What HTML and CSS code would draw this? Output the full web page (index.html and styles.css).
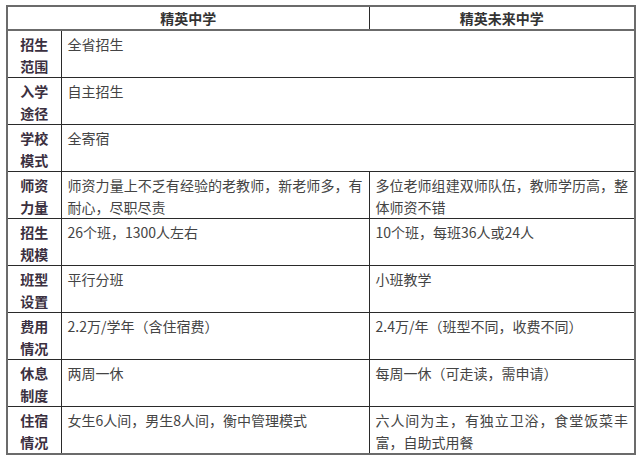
FILE: index.html
```html
<!DOCTYPE html>
<html lang="zh-CN">
<head>
<meta charset="utf-8">
<title>精英中学 vs 精英未来中学</title>
<link rel="stylesheet" href="styles.css">
</head>
<body>
<table class="cmp">
  <colgroup>
    <col class="c-label">
    <col class="c-a">
    <col class="c-b">
  </colgroup>
  <thead>
    <tr class="head">
      <th colspan="2">精英中学</th>
      <th>精英未来中学</th>
    </tr>
  </thead>
  <tbody>
    <tr><th class="lbl">招生<br>范围</th><td colspan="2">全省招生</td></tr>
    <tr><th class="lbl">入学<br>途径</th><td colspan="2">自主招生</td></tr>
    <tr><th class="lbl">学校<br>模式</th><td colspan="2">全寄宿</td></tr>
    <tr><th class="lbl">师资<br>力量</th><td>师资力量上不乏有经验的老教师，新老师多，有耐心，尽职尽责</td><td>多位老师组建双师队伍，教师学历高，整体师资不错</td></tr>
    <tr><th class="lbl">招生<br>规模</th><td>26个班，1300人左右</td><td>10个班，每班36人或24人</td></tr>
    <tr><th class="lbl">班型<br>设置</th><td>平行分班</td><td>小班教学</td></tr>
    <tr><th class="lbl">费用<br>情况</th><td>2.2万/学年（含住宿费）</td><td>2.4万/年（班型不同，收费不同）</td></tr>
    <tr><th class="lbl">休息<br>制度</th><td>两周一休</td><td>每周一休（可走读，需申请）</td></tr>
    <tr><th class="lbl">住宿<br>情况</th><td>女生6人间，男生8人间，衡中管理模式</td><td>六人间为主，有独立卫浴，食堂饭菜丰富，自助式用餐</td></tr>
  </tbody>
</table>
</body>
</html>
```

FILE: styles.css
```css
html, body {
  margin: 0;
  padding: 0;
  background: #ffffff;
}

body {
  font-family: "Noto Sans CJK SC", "Liberation Sans", sans-serif;
  font-size: 14px;
  color: #3a3a3a;
}

.cmp {
  margin: 5px 0 0 6px;
  width: 628px;
  border-collapse: collapse;
  table-layout: fixed;
  border: 2px solid #6b6b6b;
}

.c-label { width: 54px; }
.c-a { width: 308px; }
.c-b { width: 266px; }

.cmp th,
.cmp td {
  border: 1px solid #2a2a2a;
  vertical-align: top;
  padding: 2px 6px 0 6px;
  line-height: 22px;
}

.head th {
  height: 22px;
  padding: 0;
  text-align: center;
  vertical-align: middle;
  font-weight: bold;
  color: #333333;
  border-bottom: 2px solid #6b6b6b;
  line-height: 22px;
}

.cmp tbody tr {
  height: 47px;
}

.lbl {
  text-align: center;
  font-weight: bold;
  color: #3b3040;
  padding: 2px 0 0 0;
}

.cmp td {
  text-align: justify;
  color: #444444;
}
```
